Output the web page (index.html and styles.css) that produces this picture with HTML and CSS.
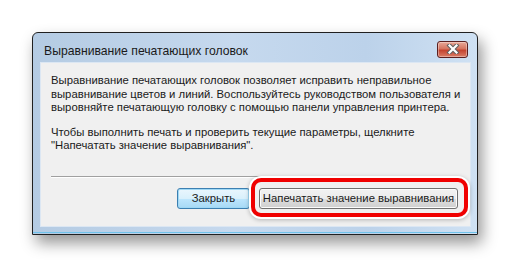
FILE: index.html
```html
<!DOCTYPE html>
<html lang="ru">
<head>
    <meta charset="UTF-8">
    <title>Выравнивание печатающих головок</title>
    <link rel="stylesheet" href="styles.css">
</head>
<body>
    <div class="window">
        <div class="titlebar">
            <span class="title">Выравнивание печатающих головок</span>
            <button class="close" aria-label="Закрыть">
                <svg width="14" height="10" viewBox="0 0 14 10">
                    <path d="M3.5 1.5 L10.5 8.5 M10.5 1.5 L3.5 8.5" stroke="#606060" stroke-width="4.2" stroke-linecap="square"/>
                    <path d="M3.5 1.5 L10.5 8.5 M10.5 1.5 L3.5 8.5" stroke="#ffffff" stroke-width="2.2" stroke-linecap="square"/>
                </svg>
            </button>
        </div>
        <div class="content">
            <p>Выравнивание печатающих головок позволяет исправить неправильное<br>
            выравнивание цветов и линий. Воспользуйтесь руководством пользователя и<br>
            выровняйте печатающую головку с помощью панели управления принтера.</p>
            <p>Чтобы выполнить печать и проверить текущие параметры, щелкните<br>
            "Напечатать значение выравнивания".</p>
            <div class="separator"></div>
            <div class="buttons">
                <button class="btn btn-default">Закрыть</button>
                <button class="btn btn-print">Напечатать значение выравнивания</button>
                <div class="highlight"></div>
            </div>
        </div>
    </div>
</body>
</html>
```

FILE: styles.css
```css
body {
    margin: 0;
    padding: 32px;
    background: #ffffff;
    font-family: "Liberation Sans", Arial, sans-serif;
}

.window {
    width: 431px;
    height: 194px;
    border: 1px solid #202020;
    border-radius: 6px 6px 0 0;
    background: linear-gradient(to right, #b4cbe3 0%, #c6d9ee 45%, #bcd2ea 75%, #cfe1f3 100%);
    box-shadow: 4px 8px 15px rgba(0, 0, 0, 0.42);
    display: flex;
    flex-direction: column;
    padding: 0 6px 7px 7px;
    position: relative;
}

.window::after {
    content: "";
    position: absolute;
    left: 0;
    right: 0;
    bottom: 1px;
    height: 1px;
    background: #6fc2ea;
}

.titlebar {
    height: 29px;
    display: flex;
    align-items: center;
    justify-content: space-between;
}

.title {
    font-size: 12.2px;
    color: #1a1a1a;
    padding-left: 4px;
    padding-top: 6px;
}

.close {
    width: 31px;
    height: 17px;
    margin-right: 3px;
    margin-top: 3px;
    padding: 0;
    border: 1px solid #5b2020;
    border-radius: 3px;
    background: linear-gradient(#e8a898 0%, #d67560 45%, #c4432f 55%, #da7e68 100%);
    display: flex;
    align-items: center;
    justify-content: center;
    box-shadow: inset 0 0 0 1px rgba(255, 255, 255, 0.35);
}

.content {
    flex: 1;
    background: #f0f0f0;
    border: 1px solid #dce7f3;
    padding: 11px 12px 10px 10px;
    display: flex;
    flex-direction: column;
    font-size: 11.3px;
    color: #1a1a1a;
    white-space: nowrap;
}

.content p {
    margin: 0 0 11px 0;
    line-height: 13.5px;
}

.separator {
    margin-top: 12px;
    height: 1px;
    background: #a0a0a0;
    border-bottom: 1px solid #ffffff;
}

.buttons {
    margin-top: 10px;
    display: flex;
    justify-content: flex-end;
    gap: 9px;
    position: relative;
}

.btn {
    height: 21px;
    padding: 0;
    font-family: "Liberation Sans", Arial, sans-serif;
    font-size: 11.3px;
    color: #1a1a1a;
    border-radius: 3px;
    white-space: nowrap;
}

.btn-default {
    width: 73px;
    border: 1px solid #3c7fb1;
    background: linear-gradient(#eaf6fd 0%, #d9f0fc 50%, #bee6fd 51%, #a7d9f5 100%);
    box-shadow: inset 0 0 0 1px #9fd8f5;
}

.btn-print {
    width: 199px;
    border: 1px solid #707070;
    background: linear-gradient(#f2f2f2 0%, #ebebeb 50%, #dddddd 51%, #cfcfcf 100%);
    box-shadow: inset 0 0 0 1px #fbfbfb;
}

.highlight {
    position: absolute;
    right: -10px;
    top: -10px;
    width: 209px;
    height: 31px;
    border: 4px solid #f00000;
    border-radius: 10px;
    box-shadow: 0 0 0 2px #ffffff, 0 1px 4px 2px rgba(0, 0, 0, 0.25);
    pointer-events: none;
}
```
